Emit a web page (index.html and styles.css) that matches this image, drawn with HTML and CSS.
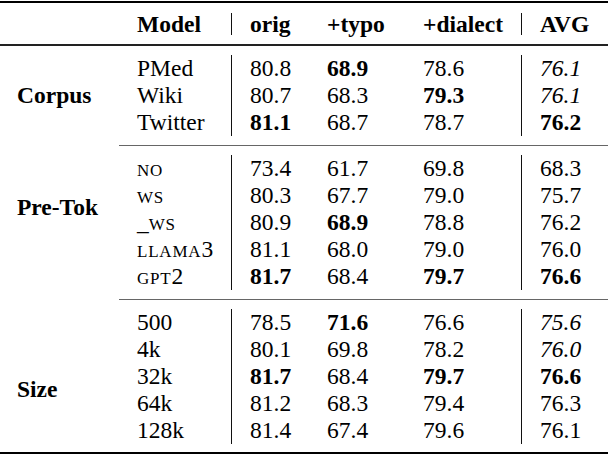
FILE: index.html
```html
<!DOCTYPE html>
<html lang="en">
  <head>
    <meta charset="UTF-8" />
    <meta name="viewport" content="width=device-width, initial-scale=1.0" />
    <title>Tokenizer results</title>
    <link rel="stylesheet" href="styles.css">
  </head>
  <body>
    <table class="results">
      <colgroup>
        <col class="c-group" />
        <col class="c-model" />
        <col class="c-orig" />
        <col class="c-typo" />
        <col class="c-dialect" />
        <col class="c-avg" />
      </colgroup>

      <thead>
        <tr class="gap gap-top"><td colspan="6"></td></tr>
        <tr class="head">
          <th></th>
          <th class="sep">Model</th>
          <th>orig</th>
          <th>+typo</th>
          <th class="sep">+dialect</th>
          <th>AVG</th>
        </tr>
        <tr class="gap gap-mid"><td colspan="6"></td></tr>
      </thead>

      <!-- Corpus -->
      <tbody>
        <tr class="gap"><th class="grp" rowspan="5">Corpus</th><td colspan="5"></td></tr>
        <tr><td class="sep">PMed</td><td>80.8</td><td><b>68.9</b></td><td class="sep">78.6</td><td><i>76.1</i></td></tr>
        <tr><td class="sep">Wiki</td><td>80.7</td><td>68.3</td><td class="sep"><b>79.3</b></td><td><i>76.1</i></td></tr>
        <tr><td class="sep">Twitter</td><td><b>81.1</b></td><td>68.7</td><td class="sep">78.7</td><td><b>76.2</b></td></tr>
        <tr class="gap"><td colspan="5"></td></tr>
      </tbody>

      <!-- Pre-tokenization -->
      <tbody>
        <tr class="gap"><th class="grp grp-up" rowspan="7">Pre-Tok</th><td colspan="5"></td></tr>
        <tr><td class="sep"><span class="sc">no</span></td><td>73.4</td><td>61.7</td><td class="sep">69.8</td><td>68.3</td></tr>
        <tr><td class="sep"><span class="sc">ws</span></td><td>80.3</td><td>67.7</td><td class="sep">79.0</td><td>75.7</td></tr>
        <tr><td class="sep">_<span class="sc">ws</span></td><td>80.9</td><td><b>68.9</b></td><td class="sep">78.8</td><td>76.2</td></tr>
        <tr><td class="sep"><span class="sc">llama</span>3</td><td>81.1</td><td>68.0</td><td class="sep">79.0</td><td>76.0</td></tr>
        <tr><td class="sep"><span class="sc">gpt</span>2</td><td><b>81.7</b></td><td>68.4</td><td class="sep"><b>79.7</b></td><td><b>76.6</b></td></tr>
        <tr class="gap"><td colspan="5"></td></tr>
      </tbody>

      <!-- Vocabulary size -->
      <tbody>
        <tr class="gap"><th class="grp grp-down" rowspan="7">Size</th><td colspan="5"></td></tr>
        <tr><td class="sep">500</td><td>78.5</td><td><b>71.6</b></td><td class="sep">76.6</td><td><i>75.6</i></td></tr>
        <tr><td class="sep">4k</td><td>80.1</td><td>69.8</td><td class="sep">78.2</td><td><i>76.0</i></td></tr>
        <tr><td class="sep">32k</td><td><b>81.7</b></td><td>68.4</td><td class="sep"><b>79.7</b></td><td><b>76.6</b></td></tr>
        <tr><td class="sep">64k</td><td>81.2</td><td>68.3</td><td class="sep">79.4</td><td>76.3</td></tr>
        <tr><td class="sep">128k</td><td>81.4</td><td>67.4</td><td class="sep">79.6</td><td>76.1</td></tr>
        <tr class="gap gap-end"><td colspan="5"></td></tr>
      </tbody>
    </table>
  </body>
</html>
```

FILE: styles.css
```css
html {
  background: #fff;
}
body {
  margin: 0;
  font-family: "Liberation Serif", "Times New Roman", serif;
  font-size: 23.5px;
  color: #000;
}
.results {
  width: 608px;
  margin-top: 1px;
  table-layout: fixed;
  border-collapse: separate;
  border-spacing: 0;
  border-top: 2px solid #000;
  border-bottom: 2px solid #000;
}
.c-group { width: 119px; }
.c-model { width: 113px; }
.c-orig { width: 77px; }
.c-typo { width: 96px; }
.c-dialect { width: 117px; }
.c-avg { width: 86px; }

td,
th {
  padding: 0 0 0 18px;
  line-height: 27px;
  text-align: left;
  white-space: nowrap;
  vertical-align: middle;
}
th {
  font-weight: bold;
}
.head th {
  line-height: 22px;
}
.sep {
  border-right: 1px solid #111;
}

/* booktabs-like spacing rows, no vertical rules there */
.gap td {
  box-sizing: border-box;
  height: 9px;
  padding: 0;
  line-height: 0;
  font-size: 0;
}
.gap-top td {
  height: 10px;
}
.gap-mid td {
  height: 11px;
  border-bottom: 2px solid #222;
}
tbody + tbody .gap:first-child td {
  height: 10px;
  border-top: 1px solid #666;
}
.gap-end td {
  height: 8px;
}

.grp {
  padding-left: 17px;
}
.grp-up {
  padding-bottom: 30px;
}
.grp-down {
  padding-top: 27px;
}
.sc {
  font-variant: small-caps;
  font-size: 1.05em;
  line-height: 1;
  letter-spacing: 0.8px;
}
```
